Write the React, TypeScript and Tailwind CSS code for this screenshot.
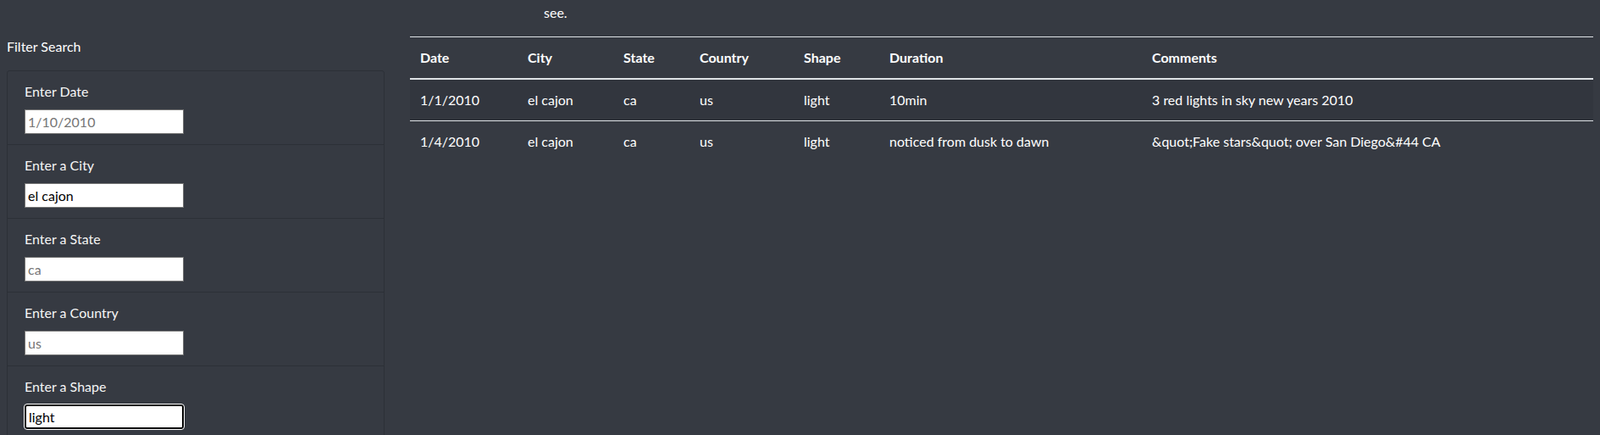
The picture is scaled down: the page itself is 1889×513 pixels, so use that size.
import React from "react";

const rows = [
  { date: "1/1/2010", city: "el cajon", state: "ca", country: "us", shape: "light", duration: "10min", comments: "3 red lights in sky new years 2010" },
  { date: "1/4/2010", city: "el cajon", state: "ca", country: "us", shape: "light", duration: "noticed from dusk to dawn", comments: "&quot;Fake stars&quot; over San Diego&#44 CA" },
];

const filters = [
  { label: "Enter Date", value: "", placeholder: "1/10/2010" },
  { label: "Enter a City", value: "el cajon", placeholder: "" },
  { label: "Enter a State", value: "", placeholder: "ca" },
  { label: "Enter a Country", value: "", placeholder: "us" },
  { label: "Enter a Shape", value: "light", placeholder: "", focused: true },
];

export default function App() {
  return (
    <div className="w-[1889px] h-[513px] overflow-hidden bg-[#363a42] text-white" style={{ fontFamily: "Lato, 'Open Sans', sans-serif" }}>
      <div className="h-[27px] overflow-hidden flex flex-col justify-end pl-[642px] text-[16px] leading-[24px]">
        <div className="whitespace-nowrap">Use the form on the left to filter the UFO sightings table by date, city, state, country or shape, then simply scroll through the matching reports to find the sightings you wish to</div>
        <div>see.</div>
      </div>
      <div className="flex mt-[16px]">
        <div className="w-[484px] shrink-0 pl-[8px]">
          <div className="text-[16px] leading-[24px]">Filter Search</div>
          <ul className="mt-[16px] w-[446px] border border-[#2c3037] rounded-[3px]">
            {filters.map((f, i) => (
              <li key={i} className={`px-[20px] pt-[12px] pb-[12px] ${i > 0 ? "border-t border-[#2c3037]" : ""}`}>
                <label className="block text-[16px] leading-[24px] text-[#f5f5f5]">{f.label}</label>
                <input
                  readOnly
                  defaultValue={f.value}
                  placeholder={f.placeholder}
                  className={`mt-[9px] block w-[188px] h-[29px] bg-white text-black text-[16px] px-[3px] placeholder:text-[#757575] ${f.focused ? "border-2 border-black rounded-[3px] outline outline-1 outline-white" : "border border-[#767676]"}`}
                  style={{ fontFamily: "Lato, 'Open Sans', sans-serif" }}
                />
              </li>
            ))}
          </ul>
        </div>
        <div className="w-[1397px] shrink-0">
          <table className="w-full table-fixed border-collapse text-[16px] leading-[24px]">
            <colgroup>
              <col className="w-[127px]" />
              <col className="w-[113px]" />
              <col className="w-[90px]" />
              <col className="w-[123px]" />
              <col className="w-[101px]" />
              <col className="w-[310px]" />
              <col />
            </colgroup>
            <thead>
              <tr className="border-t border-[#dee2e6] border-b-2 border-b-[#dee2e6]">
                {["Date", "City", "State", "Country", "Shape", "Duration", "Comments"].map((h) => (
                  <th key={h} className="text-left font-bold px-[12px] py-[12px]">{h}</th>
                ))}
              </tr>
            </thead>
            <tbody>
              {rows.map((r, i) => (
                <tr key={i} className={i === 0 ? "bg-[#32363e] border-b border-[#dee2e6]" : ""}>
                  {[r.date, r.city, r.state, r.country, r.shape, r.duration, r.comments].map((c, j) => (
                    <td key={j} className="px-[12px] py-[12px] whitespace-nowrap">{c}</td>
                  ))}
                </tr>
              ))}
            </tbody>
          </table>
        </div>
      </div>
    </div>
  );
}
